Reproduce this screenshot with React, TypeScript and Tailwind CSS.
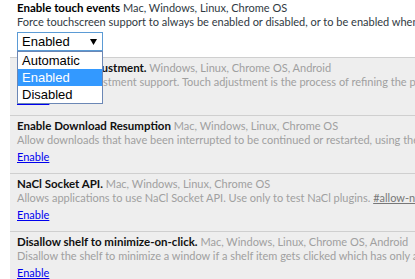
const experiments = [
  {
    title: 'Enable touch adjustment.',
    platforms: 'Windows, Linux, Chrome OS, Android',
    desc: 'Enable touch adjustment support. Touch adjustment is the process of refining the position of a touch gesture in order to compensate for touches having poor resolution compared to a mouse.',
  },
  {
    title: 'Enable Download Resumption',
    platforms: 'Mac, Windows, Linux, Chrome OS',
    desc: 'Allow downloads that have been interrupted to be continued or restarted, using the Resume context menu item.',
  },
  {
    title: 'NaCl Socket API.',
    platforms: 'Mac, Windows, Linux, Chrome OS',
    desc: 'Allows applications to use NaCl Socket API. Use only to test NaCl plugins.',
    anchor: '#allow-nacl-socket-api',
  },
  {
    title: 'Disallow shelf to minimize-on-click.',
    platforms: 'Mac, Windows, Linux, Chrome OS, Android',
    desc: 'Disallow the shelf to minimize a window if a shelf item gets clicked which has only a single, active window associated.',
  },
];

const options = ['Automatic', 'Enabled', 'Disabled'];

export default function App() {
  return (
    <div
      className="relative w-[415px] h-[279px] overflow-hidden bg-white text-[11px] whitespace-nowrap"
      style={{ fontFamily: 'Lato, "Open Sans", sans-serif' }}
    >
      <div className="ml-[10px]">
        {/* Supported experiment */}
        <div className="pl-[7px] pt-[1px] h-[57px]">
          <div className="leading-[14px] text-[#000]">
            <span className="font-bold text-[11.5px]">Enable touch events</span>{' '}
            <span className="text-[#303942]">Mac, Windows, Linux, Chrome OS</span>
          </div>
          <div className="leading-[14px] text-[#303942]">
            Force touchscreen support to always be enabled or disabled, or to be enabled when a touchscreen is detected on
            startup (Automatic, the default).
          </div>
          <div className="relative mt-[3px] w-[86px]">
            <div
              className="flex items-center justify-between h-[19px] border border-[#5b9bd5] bg-white pl-[4px] pr-[5px] text-[13px] text-black"
              style={{ fontFamily: '"Liberation Sans", Arial, sans-serif' }}
            >
              <span>Enabled</span>
              <svg width="7" height="6" viewBox="0 0 7 6">
                <path d="M0 0h7L3.5 6z" fill="#000" />
              </svg>
            </div>
            <div
              className="absolute left-0 top-[19px] z-10 w-[86px] border border-[#6b87b5] bg-white text-[13px] text-black"
              style={{ fontFamily: '"Liberation Sans", Arial, sans-serif' }}
            >
              {options.map((o) => (
                <div
                  key={o}
                  className={
                    o === 'Enabled'
                      ? 'h-[17px] leading-[17px] pl-[4px] bg-[#3399ff] text-white'
                      : 'h-[17px] leading-[17px] pl-[4px]'
                  }
                >
                  {o}
                </div>
              ))}
            </div>
          </div>
        </div>

        {/* Unsupported experiments */}
        {experiments.map((e) => (
          <div key={e.title} className="border-t border-[#cfcfcf] bg-[#eeeeee] pl-[7px] pt-[3px] pb-[9px]">
            <div className="leading-[14px]">
              <span className="font-bold text-[11.5px] text-[#111]">{e.title}</span>{' '}
              <span className="text-[#a0a0a0]">{e.platforms}</span>
            </div>
            <div className="leading-[14px] text-[#a0a0a0]">
              {e.desc}{' '}
              {e.anchor && <span className="underline text-[#777]">{e.anchor}</span>}
            </div>
            <div className="mt-[3px] leading-[14px]">
              <a href="#" className="text-[#0000ee] underline">
                Enable
              </a>
            </div>
          </div>
        ))}
      </div>
    </div>
  );
}
